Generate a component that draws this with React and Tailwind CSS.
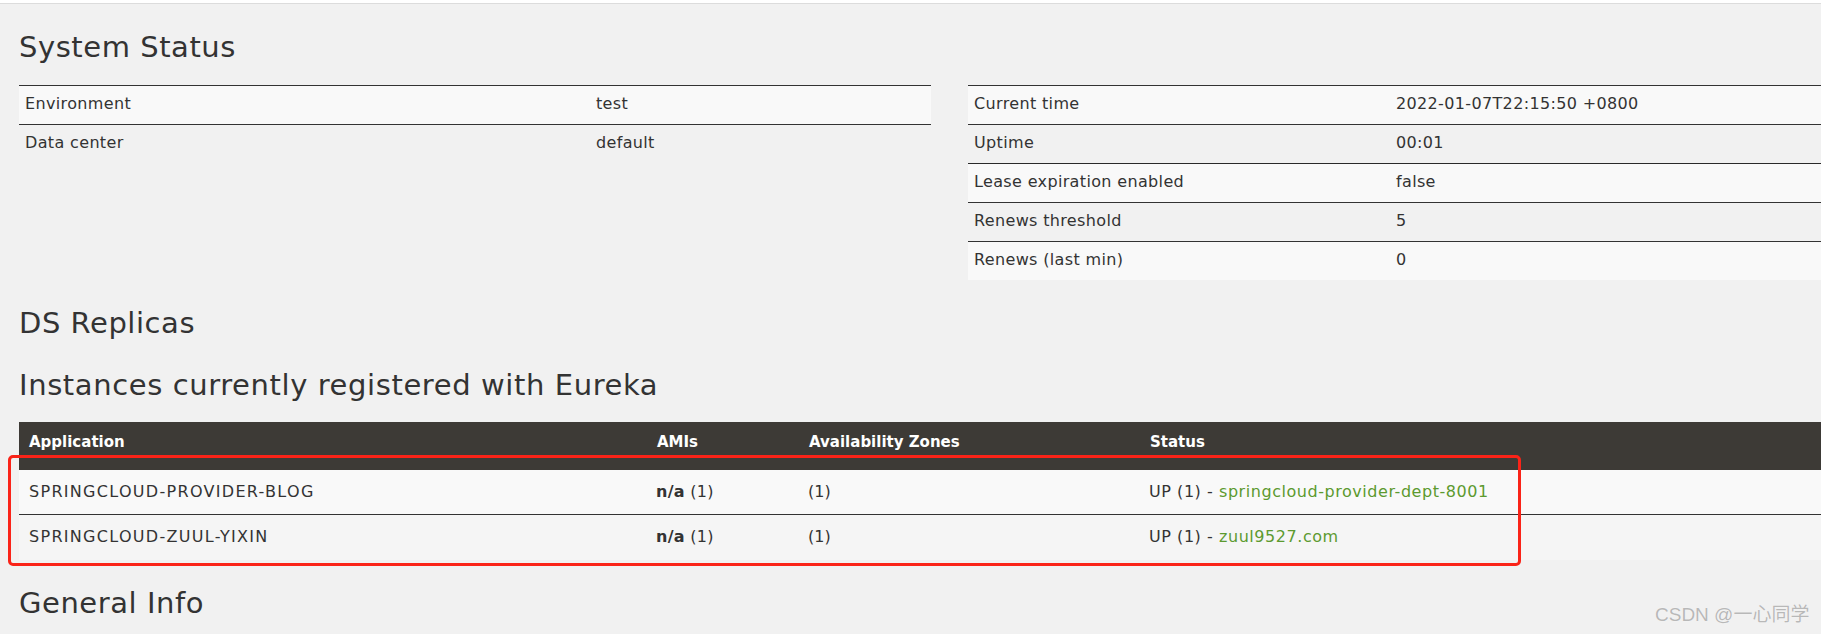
const leftRows = [
  ['Environment', 'test'],
  ['Data center', 'default'],
];

const rightRows = [
  ['Current time', '2022-01-07T22:15:50 +0800'],
  ['Uptime', '00:01'],
  ['Lease expiration enabled', 'false'],
  ['Renews threshold', '5'],
  ['Renews (last min)', '0'],
];

const instances = [
  { app: 'SPRINGCLOUD-PROVIDER-BLOG', host: 'springcloud-provider-dept-8001' },
  { app: 'SPRINGCLOUD-ZUUL-YIXIN', host: 'zuul9527.com' },
];

function InfoTable({ rows, labelWidth, width }) {
  return (
    <table className={`${width} table-fixed border-collapse text-[16px] tracking-[0.35px] text-[#333]`}>
      <colgroup>
        <col className={labelWidth} />
        <col />
      </colgroup>
      <tbody>
        {rows.map(([label, value], i) => (
          <tr
            key={label}
            className={`${i % 2 === 0 ? 'bg-[#f9f9f9]' : ''} ${i === 4 ? 'h-[38px]' : 'h-[39px]'} border-t ${i === 2 ? 'border-[#2a2a2a]' : 'border-[#333]'}`}
          >
            <td className="pl-[6px] leading-[20px] pb-[2px]">{label}</td>
            <td className="pl-[6px] leading-[20px] pb-[2px]">{value}</td>
          </tr>
        ))}
      </tbody>
    </table>
  );
}

export default function App() {
  return (
    <div className="relative w-[1821px] h-[634px] overflow-hidden bg-[#f1f1f1] font-['DejaVu_Sans',sans-serif] text-[#333]">
      {/* 상단 바 */}
      <div className="h-[4px] bg-white border-b border-[#dcdcdc]" />

      <div className="w-[1861px] ml-[19px]">
        <h2 className="mt-[25px] text-[29px] leading-[36px] tracking-[0.55px]">System Status</h2>

        <div className="mt-[20px] flex items-start gap-[37px]">
          <InfoTable rows={leftRows} width="w-[912px]" labelWidth="w-[571px]" />
          <InfoTable rows={rightRows} width="w-[912px]" labelWidth="w-[422px]" />
        </div>

        <h2 className="mt-[25px] text-[29px] leading-[36px] tracking-[0.55px]">DS Replicas</h2>
        <h2 className="mt-[26px] text-[29px] leading-[36px] tracking-[0.6px]">
          Instances currently registered with Eureka
        </h2>

        {/* 인스턴스 목록 */}
        <table className="mt-[19px] w-[1861px] table-fixed border-collapse text-[15px]">
          <colgroup>
            <col className="w-[628px]" />
            <col className="w-[152px]" />
            <col className="w-[341px]" />
            <col />
          </colgroup>
          <thead>
            <tr className="bg-[#3d3a36] text-white h-[48px]">
              <th className="text-left font-bold pl-[10px] pt-[10px] pb-[18px] leading-[20px]">Application</th>
              <th className="text-left font-bold pl-[10px] pt-[10px] pb-[18px] leading-[20px]">AMIs</th>
              <th className="text-left font-bold pl-[10px] pt-[10px] pb-[18px] leading-[20px]">Availability Zones</th>
              <th className="text-left font-bold pl-[10px] pt-[10px] pb-[18px] leading-[20px]">Status</th>
            </tr>
          </thead>
          <tbody className="text-[16px]">
            {instances.map((inst, i) => (
              <tr
                key={inst.app}
                className={`${i === 0 ? 'bg-[#f9f9f9] h-[45px]' : 'bg-[#f5f5f5] h-[45px] border-t border-[#333]'}`}
              >
                <td className="pl-[10px] leading-[20px] tracking-[1.3px]">{inst.app}</td>
                <td className="pl-[9px] leading-[20px] tracking-[0.3px]">
                  <b>n/a</b> (1)
                </td>
                <td className="pl-[9px] leading-[20px]">(1)</td>
                <td className="pl-[9px] leading-[20px] tracking-[0.55px]">
                  UP (1) - <a className="text-[#5c9a2f]">{inst.host}</a>
                </td>
              </tr>
            ))}
          </tbody>
        </table>

        <h2 className="mt-[25px] text-[29px] leading-[36px] tracking-[0.55px]">General Info</h2>
      </div>

      {/* 빨간 강조 박스 */}
      <div className="absolute left-[8px] top-[455px] w-[1513px] h-[111px] border-[3px] border-[#fa2318] rounded-[5px]" />

      {/* 워터마크 */}
      <div className="absolute left-[1655px] top-[603px] text-[19px] leading-[24px] text-[#b8b8b8] font-['Liberation_Sans','Noto_Sans_CJK_SC',sans-serif] [text-shadow:0_0_1px_#fff]">
        CSDN @一心同学
      </div>
    </div>
  );
}
